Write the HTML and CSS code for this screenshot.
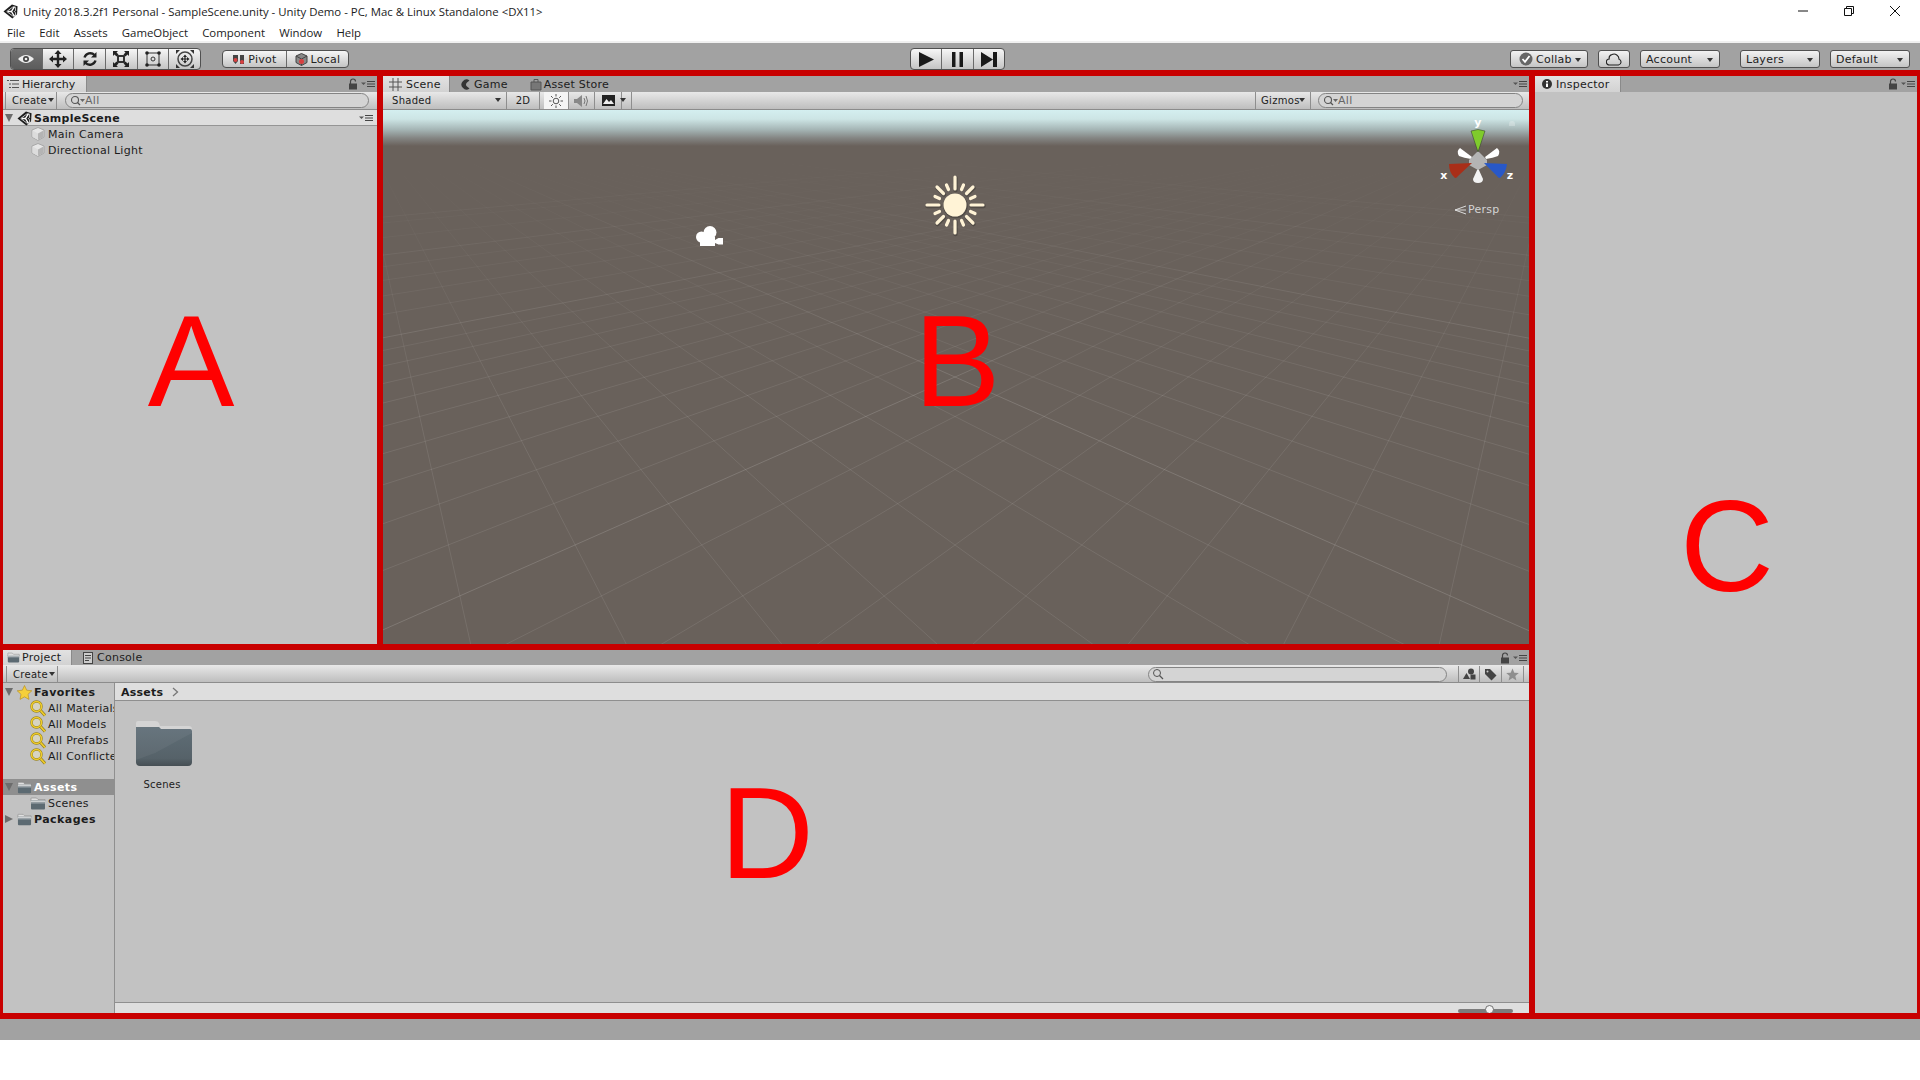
FILE: index.html
```html
<!DOCTYPE html>
<html lang="en">
<head>
    <meta charset="UTF-8">
    <title>Unity 2018.3.2f1 Personal</title>
    <link rel="stylesheet" href="styles.css">
</head>
<body>
    <svg class="defs" width="0" height="0">
        <symbol id="ic-unity" viewBox="0 0 16 16">
            <path d="M9.5 .5 15.5 2.5 15 11 10 15.5 .5 8Z" fill="#1c1c1c"/>
            <path d="M5 8H9L12 3M9 8 12 13M9 8" fill="none" stroke="#fff" stroke-width="1.5"/>
            <path d="M4 8 10 3.5 13 3 13.5 7 12 8 13.5 9.5 13 13 10 12.500Z" fill="none" stroke="#fff" stroke-width=".8"/>
        </symbol>
        <symbol id="ic-cube" viewBox="0 0 14 14">
            <path d="M7 .5 13 3V10L7 13.500 1 10V3Z" fill="#e6e6e6" stroke="#a6a6a6"/>
            <path d="M7 6.500 1.500 3.500V10L7 13Z" fill="#dcdcdc"/>
            <path d="M7 6.500 12.500 3.500V10L7 13Z" fill="#b4b4b4"/>
        </symbol>
        <symbol id="ic-lock" viewBox="0 0 10 12">
            <path d="M2.500 6V3.500A2.500 2.500 0 0 1 7.500 3.500" fill="none" stroke="#444" stroke-width="1.2"/>
            <rect x="1" y="5.500" width="8" height="6" fill="#444"/>
        </symbol>
        <symbol id="ic-menu" viewBox="0 0 14 8">
            <path d="M0 2.500H5L2.500 5Z" fill="#555"/>
            <path d="M6 1.500H14M6 4H14M6 6.500H14" stroke="#444" stroke-width="1.200"/>
        </symbol>
        <symbol id="ic-find" viewBox="0 0 16 14">
            <circle cx="6" cy="6" r="3.500" fill="none" stroke="#555" stroke-width="1.100"/>
            <path d="M8.500 8.500 11 11" stroke="#555" stroke-width="1.300"/>
            <path d="M11 5H16L13.500 8Z" fill="#666"/>
        </symbol>
        <symbol id="ic-folder" viewBox="0 0 16 13">
            <path d="M1 3V1.500Q1 1 1.500 1H6.500L8 2.500H15V4H1Z" fill="#e0e0e0" stroke="#777" stroke-width=".5"/>
            <path d="M1 3.500H15V11.500Q15 12.500 14 12.500H2Q1 12.500 1 11.500Z" fill="#5c6a72"/>
            <path d="M1 3.500H15V5.500H1Z" fill="#cdd0d2"/>
            <path d="M1 6.500H15" stroke="#8c979d" stroke-width=".7"/>
        </symbol>
        <symbol id="ic-saved" viewBox="0 0 16 17">
            <circle cx="6.500" cy="6.500" r="5" fill="#fff6c0" fill-opacity=".35" stroke="#8e7a1e" stroke-width="2.400"/>
            <circle cx="6.500" cy="6.500" r="5" fill="none" stroke="#f0cd2a" stroke-width="1.500"/>
            <path d="M10.500 10.500 15 15.500" stroke="#8e7a1e" stroke-width="3"/>
            <path d="M10.500 10.500 15 15.500" stroke="#f0cd2a" stroke-width="1.800"/>
        </symbol>
    </svg>

    <div class="titlebar">
        <svg class="title-logo" width="15" height="15"><use href="#ic-unity"/></svg>
        <span class="title-text">Unity 2018.3.2f1 Personal - SampleScene.unity - Unity Demo - PC, Mac &amp; Linux Standalone &lt;DX11&gt;</span>
        <div class="win-buttons">
            <span class="win-btn"><svg width="12" height="12"><path d="M1 6H11" stroke="#111"/></svg></span>
            <span class="win-btn"><svg width="12" height="12"><path d="M1.500 3.500H8.500V10.500H1.500ZM3.500 3.500V1.500H10.500V8.500H8.500" fill="none" stroke="#111"/></svg></span>
            <span class="win-btn"><svg width="12" height="12"><path d="M1 1 11 11M11 1 1 11" stroke="#111"/></svg></span>
        </div>
    </div>

    <div class="menubar">
        <span>File</span>
        <span>Edit</span>
        <span>Assets</span>
        <span>GameObject</span>
        <span>Component</span>
        <span>Window</span>
        <span>Help</span>
    </div>

    <div class="toolbar">
        <div class="btn-group tools">
            <span class="tool tool-on"><svg width="20" height="14" viewBox="0 0 20 14"><path d="M2 7Q10 -1 18 7 10 15 2 7Z" fill="#eee"/><circle cx="10" cy="7" r="3" fill="#444"/><circle cx="10" cy="7" r="1.300" fill="#eee"/></svg></span>
            <span class="tool"><svg width="18" height="18" viewBox="0 0 18 18"><path d="M9 0 12.500 4H10.200V7.800H14V5.500L18 9 14 12.500V10.200H10.200V14H12.500L9 18 5.500 14H7.800V10.200H4V12.500L0 9 4 5.500V7.800H7.800V4H5.500Z" fill="#222"/></svg></span>
            <span class="tool"><svg width="16" height="16" viewBox="0 0 16 16"><path d="M2.500 6.500A6 6 0 0 1 12.500 4" fill="none" stroke="#222" stroke-width="2.400"/><path d="M14.500 1V6.500H9Z" fill="#222"/><path d="M13.500 9.500A6 6 0 0 1 3.500 12" fill="none" stroke="#222" stroke-width="2.400"/><path d="M1.500 15V9.500H7Z" fill="#222"/></svg></span>
            <span class="tool"><svg width="18" height="18" viewBox="0 0 18 18"><rect x="6" y="6" width="6" height="6" fill="none" stroke="#222" stroke-width="1.800"/><path d="M1 1H6L4.500 2.500 6.500 4.500 4.500 6.500 2.500 4.500 1 6ZM17 1V6L15.500 4.500 13.500 6.500 11.500 4.500 13.500 2.500 12 1ZM1 17V12L2.500 13.500 4.500 11.500 6.500 13.500 4.500 15.500 6 17ZM17 17H12L13.500 15.500 11.500 13.500 13.500 11.500 15.500 13.500 17 12Z" fill="#222"/></svg></span>
            <span class="tool"><svg width="18" height="18" viewBox="0 0 18 18"><path d="M3 3H15V15H3Z" fill="none" stroke="#333"/><circle cx="9" cy="9" r="2" fill="none" stroke="#333"/><circle cx="3" cy="3" r="1.800" fill="#222"/><circle cx="15" cy="3" r="1.800" fill="#222"/><circle cx="3" cy="15" r="1.800" fill="#222"/><circle cx="15" cy="15" r="1.800" fill="#222"/></svg></span>
            <span class="tool tool-last"><svg width="20" height="20" viewBox="0 0 20 20"><circle cx="10" cy="10" r="7" fill="none" stroke="#444" stroke-width="1.500"/><path d="M10 5.500 12 8H10.600V9.400H12V8L14.500 10 12 12V10.600H10.600V12H12L10 14.500 8 12H9.400V10.600H8V12L5.500 10 8 8V9.400H9.400V8H8Z" fill="#222"/><path d="M1 1H5L1 5ZM19 1V5L15 1ZM1 19V15L5 19ZM19 19H15L19 15Z" fill="#333"/></svg></span>
        </div>

        <div class="btn-group pivot">
            <span class="pivot-btn pivot-left"><svg width="13" height="11" viewBox="0 0 13 11"><path d="M1 1H6V7L3.500 10 1 7Z" fill="#444"/><rect x="8" y="1" width="4" height="9" fill="#444"/><circle cx="3.500" cy="6" r="2" fill="#d84040"/><circle cx="10" cy="8" r="2" fill="#d84040"/></svg>Pivot</span>
            <span class="pivot-btn"><svg width="13" height="13" viewBox="0 0 13 13"><path d="M6.500 .5 12 3V9.500L6.500 12.500 1 9.500V3Z" fill="#888" stroke="#444"/><path d="M1 3 6.500 6 12 3M6.500 6V12.500" fill="none" stroke="#444"/><circle cx="6.500" cy="8.500" r="2.500" fill="#d84040"/></svg>Local</span>
        </div>

        <div class="btn-group playback">
            <span class="tool"><svg width="15" height="15" viewBox="0 0 15 15"><path d="M0 0 15 7.500 0 15Z" fill="#1a1a1a"/></svg></span>
            <span class="tool"><svg width="11" height="15" viewBox="0 0 11 15"><path d="M0 0H3.500V15H0ZM7.500 0H11V15H7.500Z" fill="#1a1a1a"/></svg></span>
            <span class="tool tool-last"><svg width="16" height="15" viewBox="0 0 16 15"><path d="M0 0 12 7.500 0 15ZM12 0H16V15H12Z" fill="#1a1a1a"/></svg></span>
        </div>

        <div class="top-right">
            <span class="drop collab"><svg width="14" height="14" viewBox="0 0 14 14"><circle cx="7" cy="7" r="6.500" fill="#666"/><path d="M3.500 7 6 9.800 10.500 4" fill="none" stroke="#fff" stroke-width="1.800"/></svg>Collab<i class="caret"></i></span>
            <span class="drop cloud"><svg width="16" height="13" viewBox="0 0 16 13"><path d="M3.500 12H12.500A3 3 0 0 0 13 6.200 5 5 0 0 0 6 1.500 4 4 0 0 0 3.200 6 3 3 0 0 0 3.500 12Z" fill="none" stroke="#222" stroke-width="1.100"/></svg></span>
            <span class="drop account">Account<i class="caret"></i></span>
            <span class="drop layers">Layers<i class="caret"></i></span>
            <span class="drop layout">Default<i class="caret"></i></span>
        </div>
    </div>

    <div class="workspace">
        <div class="left-col">
            <div class="top-row">
                <section class="panel hierarchy">
                    <div class="tabstrip">
                        <span class="tab tab-on tab-hierarchy"><svg width="12" height="10" viewBox="0 0 12 10"><path d="M3 1.500H12M5 5H12M5 8.500H12" stroke="#555"/><path d="M0 1H2V2H0ZM2 4.500H4V5.500H2ZM2 8H4V9H2Z" fill="#555"/></svg>Hierarchy</span>
                        <div class="strip-end">
                            <svg width="10" height="12"><use href="#ic-lock"/></svg>
                            <svg width="14" height="8"><use href="#ic-menu"/></svg>
                        </div>
                    </div>
                    <div class="bar">
                        <span class="bar-btn create">Create<i class="caret"></i></span>
                        <span class="search search-hierarchy"><svg width="16" height="14"><use href="#ic-find"/></svg>All</span>
                    </div>
                    <div class="scene-row">
                        <i class="arrow-down"></i>
                        <svg width="15" height="15"><use href="#ic-unity"/></svg>
                        <b>SampleScene</b>
                        <svg class="row-menu" width="14" height="8"><use href="#ic-menu"/></svg>
                    </div>
                    <div class="tree-item"><svg width="14" height="14"><use href="#ic-cube"/></svg>Main Camera</div>
                    <div class="tree-item"><svg width="14" height="14"><use href="#ic-cube"/></svg>Directional Light</div>
                    <div class="letter">A</div>
                </section>

                <section class="panel scene">
                    <div class="tabstrip">
                        <span class="tab tab-on tab-scene"><svg width="13" height="13" viewBox="0 0 13 13"><path d="M4 0V13M9 0V13M0 4H13M0 9H13" stroke="#555"/></svg>Scene</span>
                        <span class="tab tab-game"><svg width="11" height="11" viewBox="0 0 11 11"><path d="M9.500 1.500A5 5 0 1 0 9.500 9.500L7 7.500A2.500 2.500 0 0 1 7 3.500Z" fill="#333"/></svg>Game</span>
                        <span class="tab tab-store"><svg width="12" height="13" viewBox="0 0 12 13"><path d="M1 4H11V12H1Z" fill="#777" stroke="#555"/><path d="M4 4V1.500H8V4" fill="none" stroke="#555"/></svg>Asset Store</span>
                        <div class="strip-end">
                            <svg width="14" height="8"><use href="#ic-menu"/></svg>
                        </div>
                    </div>
                    <div class="bar">
                        <span class="bar-btn shaded">Shaded<i class="caret"></i></span>
                        <span class="bar-btn two-d">2D</span>
                        <span class="bar-btn icon-btn btn-white"><svg width="14" height="14" viewBox="0 0 14 14"><circle cx="7" cy="7" r="2.800" fill="none" stroke="#555"/><path d="M7 0V2.500M7 11.500V14M0 7H2.500M11.500 7H14M2 2 3.800 3.800M10.200 10.200 12 12M12 2 10.200 3.800M3.800 10.200 2 12" stroke="#555"/></svg></span>
                        <span class="bar-btn icon-btn"><svg width="15" height="14" viewBox="0 0 15 14"><path d="M0 5H3L8 1V13L3 9H0Z" fill="#888"/><path d="M10 4Q12 7 10 10M12 2Q15 7 12 12" fill="none" stroke="#777"/></svg></span>
                        <span class="bar-btn icon-btn btn-image"><svg width="13" height="11" viewBox="0 0 13 11"><rect width="13" height="11" fill="#222"/><path d="M1 9 4.500 4 7 7 9 5 12 9Z" fill="#eee"/></svg></span>
                        <span class="bar-btn btn-more"><i class="caret"></i></span>
                        <span class="bar-btn gizmos">Gizmos<i class="caret"></i></span>
                        <span class="search search-scene"><svg width="16" height="14"><use href="#ic-find"/></svg>All</span>
                    </div>
                    <div class="viewport">
                        <svg class="grid" width="1146" height="534" viewBox="0 0 1146 534">
                            <g id="grid-right" fill="none" stroke="#fff" stroke-opacity=".09">
                                <path d="M1176 0-32 5391M1176 0-32 2344M1176 0-32 1498M1176 0-32 1101M1176 0-32 870M1176 0-32 719M1176 0-32 613"/>
                                <path d="M1176 0-32 473M1176 0-32 425M1176 0-32 385M1176 0-32 353M1176 0-32 325M1176 0-32 301M1176 0-32 281M1176 0-32 263M1176 0-32 247"/>
                                <path d="M1176 0-32 210M1176 0-32 191M1176 0-32 175M1176 0-32 161M1176 0-32 131M1176 0-32 116"/>
                                <path d="M1176 0-32 534M1176 0-32 234M1176 0-32 149M1176 0-32 110" stroke-opacity=".15"/>
                            </g>
                            <use href="#grid-right" transform="translate(1144 0) scale(-1 1)"/>
                        </svg>
                        <div class="sky"></div>

                        <svg class="camera-icon" width="30" height="24" viewBox="0 0 30 24">
                            <circle cx="6.500" cy="12" r="5.500" fill="#fff"/>
                            <circle cx="15" cy="7.500" r="6.500" fill="#fff"/>
                            <path d="M5 12H20V21H5Z" fill="#fff"/>
                            <path d="M20 15 23.500 13H28V19.500H23.500L20 18Z" fill="#fff"/>
                        </svg>

                        <svg class="sun-icon" width="64" height="64" viewBox="-32 -32 64 64">
                            <g stroke-linecap="round" stroke="#3e3a34" stroke-opacity=".55" stroke-width="4.500" transform="translate(.5 1)">
                                <circle r="11.500" fill="none" stroke-width="1.500"/>
                                <path d="M0-16V-28M0 16V28M-16 0H-28M16 0H28M-11.500-11.500-18-18M11.500-11.500 18-18M-11.500 11.500-18 18M11.500 11.500 18 18"/>
                            </g>
                            <circle r="11.500" fill="#fff3d6"/>
                            <g stroke="#fff3d6" stroke-linecap="round" stroke-width="3.200">
                                <path d="M0-16V-28M0 16V28M-16 0H-28M16 0H28M-11.500-11.500-18-18M11.500-11.500 18-18M-11.500 11.500-18 18M11.500 11.500 18 18"/>
                                <path d="M6.500-15.500 8.500-20M-6.500-15.500-8.500-20M6.500 15.500 8.500 20M-6.500 15.500-8.500 20M15.500-6.500 20-8.500M-15.500-6.500-20-8.500M15.500 6.500 20 8.500M-15.500 6.500-20 8.500"/>
                            </g>
                        </svg>

                        <svg class="gizmo" width="100" height="110" viewBox="0 0 100 110">
                            <path d="M42 47 30 38Q26 41 29 46 34 48 41 49Z" fill="#fff"/>
                            <path d="M55 47 67 38Q71 41 68 46 63 48 56 49Z" fill="#fff"/>
                            <path d="M48 58 53 69Q53 73 48 73 43 73 43 69Z" fill="#f2f2f2"/>
                            <path d="M48 41 57 50 57 55 48 60 39 55 39 50Z" fill="#b4b4b4"/>
                            <path d="M48 42 41 21Q48 18 55 21Z" fill="#7fcb2c" stroke="#333" stroke-width=".5"/>
                            <path d="M42 53 19 54Q19 63 25 68 27 68 28 66Z" fill="#a92e18"/>
                            <path d="M54 53 77 54Q76 63 70 68 68 68 67 66Z" fill="#2858c8"/>
                            <path d="M82 11A3 3 0 0 1 85 14V16H79V14A3 3 0 0 1 82 11Z" fill="#fff" fill-opacity=".25"/>
                            <text x="48" y="16" class="axis">y</text>
                            <text x="14" y="69" class="axis">x</text>
                            <text x="80" y="69" class="axis">z</text>
                        </svg>

                        <div class="persp"><svg width="12" height="10" viewBox="0 0 12 10"><path d="M12 1 1 5 12 9M12 5H1" fill="none" stroke="#dcdcdc"/></svg>Persp</div>
                    </div>
                    <div class="letter">B</div>
                </section>
            </div>

            <section class="panel project">
                <div class="tabstrip">
                    <span class="tab tab-on tab-project"><svg width="13" height="11"><use href="#ic-folder"/></svg>Project</span>
                    <span class="tab tab-console"><svg width="10" height="12" viewBox="0 0 10 12"><rect x=".5" y=".5" width="9" height="11" fill="#ccc" stroke="#444"/><path d="M2 3.500H8M2 6H8M2 8.500H6" stroke="#444"/></svg>Console</span>
                    <div class="strip-end">
                        <svg width="10" height="12"><use href="#ic-lock"/></svg>
                        <svg width="14" height="8"><use href="#ic-menu"/></svg>
                    </div>
                </div>
                <div class="bar">
                    <span class="bar-btn create create-project">Create<i class="caret"></i></span>
                    <span class="search search-project"><svg width="12" height="12" viewBox="0 0 12 12"><circle cx="5" cy="5" r="3.500" fill="none" stroke="#555"/><path d="M7.500 7.500 11 11" stroke="#555" stroke-width="1.300"/></svg></span>
                    <span class="bar-btn filter-btn filter-first"><svg width="13" height="12" viewBox="0 0 13 12"><circle cx="8" cy="3.500" r="3" fill="#444"/><path d="M0 11 3.500 5 7 11Z" fill="#444"/><rect x="7.500" y="6.500" width="5" height="5" fill="#444"/></svg></span>
                    <span class="bar-btn filter-btn"><svg width="13" height="13" viewBox="0 0 13 13"><path d="M1 1H6L12.500 7.500 7.500 12.500 1 6Z" fill="#444"/><circle cx="3.500" cy="3.500" r="1" fill="#ccc"/></svg></span>
                    <span class="bar-btn filter-btn"><svg width="13" height="13" viewBox="0 0 13 13"><path d="M6.500 .5 8.300 4.700 12.800 5 9.300 8 10.400 12.500 6.500 10.100 2.600 12.500 3.700 8 .2 5 4.700 4.700Z" fill="#8e8e8e"/></svg></span>
                </div>
                <div class="project-body">
                    <div class="project-tree">
                        <div class="pt-row pt-head"><i class="arrow-down"></i><svg width="15" height="15" viewBox="0 0 15 15"><path d="M7.500 .5 9.700 5.200 14.800 5.800 11 9.300 12 14.400 7.500 11.900 3 14.400 4 9.300 .2 5.800 5.300 5.200Z" fill="#f5cf3a" stroke="#b48a18" stroke-width=".6"/></svg><b>Favorites</b></div>
                        <div class="pt-row pt-sub"><svg width="16" height="17"><use href="#ic-saved"/></svg>All Materials</div>
                        <div class="pt-row pt-sub"><svg width="16" height="17"><use href="#ic-saved"/></svg>All Models</div>
                        <div class="pt-row pt-sub"><svg width="16" height="17"><use href="#ic-saved"/></svg>All Prefabs</div>
                        <div class="pt-row pt-sub"><svg width="16" height="17"><use href="#ic-saved"/></svg>All Conflicted</div>
                        <div class="pt-row pt-head pt-selected"><i class="arrow-down"></i><svg width="15" height="13"><use href="#ic-folder"/></svg><b>Assets</b></div>
                        <div class="pt-row pt-sub"><svg width="16" height="13"><use href="#ic-folder"/></svg>Scenes</div>
                        <div class="pt-row pt-head"><i class="arrow-right"></i><svg width="15" height="13"><use href="#ic-folder"/></svg><b>Packages</b></div>
                    </div>
                    <div class="project-main">
                        <div class="crumbs"><b>Assets</b><svg width="7" height="10" viewBox="0 0 7 10"><path d="M1 1 5.500 5 1 9" fill="none" stroke="#777" stroke-width="1.300"/></svg></div>
                        <div class="asset-grid">
                            <div class="asset">
                                <svg width="58" height="47" viewBox="0 0 58 47">
                                    <defs>
                                        <linearGradient id="folder-body" x1="0" y1="0" x2="0" y2="1">
                                            <stop offset="0" stop-color="#5f6e77"/>
                                            <stop offset=".8" stop-color="#566269"/>
                                            <stop offset="1" stop-color="#464f54"/>
                                        </linearGradient>
                                    </defs>
                                    <path d="M1 8V3Q1 1 3 1H20Q23 1 24 3L25 6H54Q57 6 57 9V12H1Z" fill="#d4d4d4"/>
                                    <path d="M1 7H24L26 9H55Q57 9 57 11V42Q57 46 53 46H5Q1 46 1 42Z" fill="url(#folder-body)"/>
                                    <path d="M1 7H24L26 9H55Q57 9 57 11V13L20 33 1 40Z" fill="#fff" fill-opacity=".05"/>
                                </svg>
                                <span>Scenes</span>
                            </div>
                        </div>
                        <div class="zoom-bar">
                            <span class="slider"><i class="knob"></i></span>
                        </div>
                    </div>
                </div>
                <div class="letter">D</div>
            </section>
        </div>

        <section class="panel inspector">
            <div class="tabstrip">
                <span class="tab tab-on tab-inspector"><svg width="10" height="10" viewBox="0 0 10 10"><circle cx="5" cy="5" r="5" fill="#333"/><path d="M4 2H6V3.500H4ZM4 4.500H6V8H4Z" fill="#fff"/></svg>Inspector</span>
                <div class="strip-end">
                    <svg width="10" height="12"><use href="#ic-lock"/></svg>
                    <svg width="14" height="8"><use href="#ic-menu"/></svg>
                </div>
            </div>
            <div class="letter">C</div>
        </section>
    </div>

    <div class="statusbar"></div>
</body>
</html>
```

FILE: styles.css
```css
:root {
    --chrome: #a2a2a2;
    --panel: #c2c2c2;
    --mark: #c80000;
    --line: #8c8c8c;
    --text: #1c1c1c;
}

* {
    box-sizing: border-box;
}

body {
    margin: 0;
    width: 1920px;
    height: 1080px;
    overflow: hidden;
    background: #fff;
    color: var(--text);
    font-family: "DejaVu Sans", sans-serif;
    font-size: 11px;
    letter-spacing: 0.25px;
}

.defs {
    position: absolute;
}

i {
    display: block;
}

svg {
    flex: none;
    display: block;
}

/* window chrome */
.titlebar {
    height: 22px;
    display: flex;
    align-items: center;
    padding-left: 3px;
    font-family: "Open Sans", sans-serif;
    font-size: 11.4px;
    letter-spacing: 0;
}

.title-logo {
    margin-right: 5px;
}

.win-buttons {
    margin-left: auto;
    margin-right: 2px;
    display: flex;
}

.win-btn {
    width: 46px;
    display: flex;
    justify-content: center;
}

.menubar {
    height: 21px;
    padding: 2px 0 0 7px;
    display: flex;
    align-items: center;
    gap: 14.2px;
    border-bottom: 2px solid #f0f0f0;
    font-family: "Open Sans", sans-serif;
    font-size: 11.4px;
    letter-spacing: 0;
}

.toolbar {
    height: 27px;
    background: var(--chrome);
    padding: 5px 10px 0;
    display: flex;
    align-items: flex-start;
    color: #222;
}

.btn-group {
    display: flex;
    border: 1px solid #505050;
    border-radius: 4px;
    overflow: hidden;
    background: linear-gradient(#f6f6f6, #c4c4c4);
}

.tools {
    width: 191px;
    height: 22px;
}

.playback {
    width: 95px;
    height: 22px;
    margin-left: 561px;
}

.tool {
    flex: 1;
    display: flex;
    align-items: center;
    justify-content: center;
    border-right: 1px solid #6a6a6a;
}

.tool-last {
    border-right: 0;
}

.tool-on {
    background: linear-gradient(#747474, #5c5c5c);
}

.pivot {
    width: 127px;
    height: 18px;
    margin: 2px 0 0 21px;
}

.pivot-btn {
    display: flex;
    align-items: center;
    justify-content: center;
    gap: 3px;
    flex: 1;
}

.pivot-left {
    flex: none;
    width: 64px;
    border-right: 1px solid #6a6a6a;
}

.top-right {
    margin-left: auto;
    margin-top: 2px;
    display: flex;
}

.drop {
    height: 18px;
    display: flex;
    align-items: center;
    position: relative;
    padding-left: 5px;
    border: 1px solid #505050;
    border-radius: 3px;
    background: linear-gradient(#f2f2f2, #c4c4c4);
}

.drop .caret {
    position: absolute;
    right: 6px;
    top: 7px;
}

.collab {
    width: 78px;
    padding-left: 8px;
    gap: 3px;
}

.cloud {
    width: 32px;
    margin-left: 10px;
    padding: 0;
    justify-content: center;
}

.account {
    width: 80px;
    margin-left: 10px;
}

.layers {
    width: 80px;
    margin-left: 20px;
}

.layout {
    width: 80px;
    margin-left: 10px;
}

.caret {
    width: 0;
    height: 0;
    border: 3px solid transparent;
    border-top: 4px solid #333;
    border-bottom: 0;
}

/* docked panels */
.workspace {
    height: 949px;
    background: var(--mark);
    padding: 6px 3px;
    display: flex;
    gap: 6px;
}

.left-col {
    width: 1526px;
    display: flex;
    flex-direction: column;
    gap: 6px;
}

.top-row {
    height: 568px;
    display: flex;
    gap: 6px;
}

.panel {
    position: relative;
    display: flex;
    flex-direction: column;
    background: var(--panel);
    overflow: hidden;
}

.hierarchy {
    width: 374px;
}

.scene {
    width: 1146px;
}

.project {
    height: 363px;
}

.inspector {
    width: 382px;
}

.letter {
    position: absolute;
    inset: 0;
    display: flex;
    align-items: center;
    justify-content: center;
    font-family: "Liberation Sans", sans-serif;
    font-size: 130px;
    letter-spacing: 0;
    color: #ff0000;
    line-height: 1;
    padding: 2px 0 0 2px;
}

.tabstrip {
    height: 16px;
    flex: none;
    background: var(--chrome);
    display: flex;
    align-items: center;
}

.project .tabstrip,
.project .tab {
    height: 15px;
}

.tab {
    height: 16px;
    display: flex;
    align-items: center;
    gap: 4px;
}

.tab-on {
    background: linear-gradient(#e2e2e2, #d2d2d2);
    box-shadow: 1px 0 0 #8a8a8a;
}

.tab-hierarchy {
    width: 83px;
    padding-left: 4px;
    gap: 3px;
    letter-spacing: 0;
}

.tab-scene {
    width: 66px;
    padding-left: 6px;
}

.tab-game {
    margin-left: 11px;
    gap: 3px;
}

.tab-store {
    margin-left: 22px;
    gap: 2px;
}

.tab-project {
    width: 68px;
    padding-left: 4px;
    gap: 2px;
}

.tab-console {
    margin-left: 12px;
}

.tab-inspector {
    width: 85px;
    padding-left: 7px;
}

.strip-end {
    margin-left: auto;
    padding-right: 2px;
    display: flex;
    align-items: center;
    gap: 3px;
}

.bar {
    height: 18px;
    flex: none;
    display: flex;
    align-items: center;
    padding-left: 2px;
    font-size: 10px;
    letter-spacing: 0.3px;
    border-bottom: 1px solid var(--line);
    background: linear-gradient(#e8e8e8, #bebebe);
}

.project .bar {
    padding-top: 1px;
}

.bar-btn {
    height: 17px;
    display: flex;
    align-items: center;
    justify-content: center;
    position: relative;
    border-right: 1px solid #8e8e8e;
}

.create {
    width: 52px;
    padding: 0 12px 0 6px;
    justify-content: flex-start;
    border-left: 1px solid #8e8e8e;
}

.bar-btn .caret {
    position: absolute;
    right: 5px;
    top: 6px;
}

.create .caret {
    right: 2px;
}

.search {
    height: 15px;
    display: flex;
    align-items: center;
    padding-left: 3px;
    border: 1px solid #848484;
    border-radius: 8px;
    background: #d4d4d4;
    color: #666;
    font-size: 11px;
}

.search-hierarchy {
    width: 304px;
    margin-left: 8px;
}

.shaded {
    width: 122px;
    justify-content: flex-start;
    padding-left: 7px;
}

.two-d {
    width: 33px;
}

.icon-btn {
    width: 26px;
}

.btn-white {
    background: #f4f4f4;
    margin-left: 4px;
    width: 25px;
}

.btn-image {
    width: 27px;
}

.btn-more {
    width: 10px;
}

.gizmos {
    margin-left: 623px;
    width: 56px;
    justify-content: flex-start;
    border-left: 1px solid #8e8e8e;
    padding-left: 5px;
}

.search-scene {
    width: 205px;
    margin-left: 7px;
}

.scene-row {
    height: 16px;
    display: flex;
    align-items: center;
    gap: 2px;
    padding: 1px 0 0 2px;
    background: #dedede;
    border-bottom: 1px solid #959595;
}

.row-menu {
    margin-left: auto;
    margin-right: 4px;
}

.arrow-down {
    width: 0;
    height: 0;
    margin-right: 2px;
    border: 4px solid transparent;
    border-top: 8px solid #6c6c6c;
    border-bottom: 0;
}

.arrow-right {
    width: 0;
    height: 0;
    margin-right: 2px;
    border: 4px solid transparent;
    border-left: 8px solid #6c6c6c;
    border-right: 0;
}

.tree-item {
    height: 16px;
    display: flex;
    align-items: center;
    gap: 3px;
    padding-left: 28px;
}

/* scene view */
.viewport {
    position: relative;
    flex: 1;
    background: #69615b;
    overflow: hidden;
}

.grid {
    position: absolute;
    left: 0;
    top: 0;
    -webkit-mask-image: linear-gradient(transparent 8%, rgba(0, 0, 0, 0.35) 25%, #000 55%);
    mask-image: linear-gradient(transparent 8%, rgba(0, 0, 0, 0.35) 25%, #000 55%);
}

.sky {
    position: absolute;
    left: 0;
    right: 0;
    top: 0;
    height: 36px;
    background: linear-gradient(#d4eff0, #cde5e5 25%, #a4b4b4 55%, #848583 78%, #69615b);
}

.camera-icon {
    position: absolute;
    left: 312px;
    top: 115px;
}

.sun-icon {
    position: absolute;
    left: 540px;
    top: 63px;
}

.gizmo {
    position: absolute;
    left: 1047px;
    top: 0;
}

.axis {
    fill: #fff;
    font-family: "DejaVu Sans", sans-serif;
    font-size: 11px;
    font-weight: 700;
    text-anchor: middle;
}

.persp {
    position: absolute;
    left: 1071px;
    top: 93px;
    display: flex;
    align-items: center;
    gap: 2px;
    color: #d4d4d4;
}

/* project window */
.create-project {
    margin-left: 1px;
}

.search-project {
    width: 299px;
    margin: 0 11px 0 1090px;
}

.filter-btn {
    width: 22px;
}

.filter-first {
    border-left: 1px solid #8e8e8e;
}

.project-body {
    flex: 1;
    display: flex;
    min-height: 0;
}

.project-tree {
    width: 112px;
    flex: none;
    border-right: 1px solid #8f8f8f;
    overflow: hidden;
    white-space: nowrap;
    padding-top: 1px;
}

.pt-row {
    height: 16px;
    display: flex;
    align-items: center;
}

.pt-head {
    gap: 2px;
    padding-left: 2px;
}

.pt-head b {
    letter-spacing: 0.45px;
}

.pt-sub {
    gap: 2px;
    padding-left: 27px;
}

.pt-selected {
    margin-top: 15px;
    background: #8f8f8f;
    color: #fff;
}

.project-main {
    flex: 1;
    display: flex;
    flex-direction: column;
}

.crumbs {
    height: 18px;
    flex: none;
    display: flex;
    align-items: center;
    gap: 9px;
    padding: 1px 0 0 6px;
    background: #dedede;
    border-bottom: 1px solid #8f8f8f;
}

.asset-grid {
    flex: 1;
    padding: 19px 0 0 20px;
}

.asset {
    width: 58px;
    display: flex;
    flex-direction: column;
    align-items: center;
    gap: 12px;
    font-size: 10px;
}

.asset span {
    padding-right: 4px;
}

.zoom-bar {
    height: 11px;
    flex: none;
    position: relative;
    background: #dedede;
    border-top: 1px solid #8f8f8f;
}

.slider {
    position: absolute;
    left: 1343px;
    top: 6px;
    width: 55px;
    height: 4px;
    border-radius: 2px;
    background: #7c7c7c;
}

.knob {
    position: absolute;
    left: 27px;
    top: -4px;
    width: 9px;
    height: 9px;
    border-radius: 50%;
    background: #f2f2f2;
    border: 1px solid #707070;
}

.statusbar {
    height: 21px;
    background: var(--chrome);
}
```
